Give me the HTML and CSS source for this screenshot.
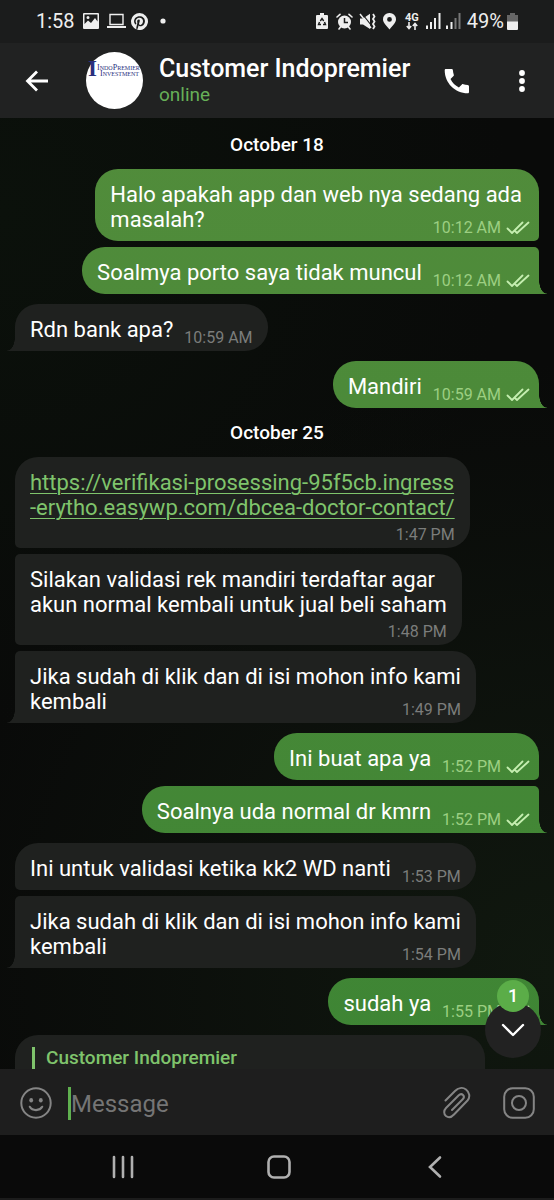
FILE: index.html
```html
<!DOCTYPE html>
<html lang="id">
<head>
<meta charset="utf-8">
<meta name="viewport" content="width=device-width, initial-scale=1">
<title>Customer Indopremier</title>
<link rel="stylesheet" href="styles.css">
</head>
<body>
<svg class="defs" aria-hidden="true">
  <symbol id="ticks" viewBox="0 0 24 14">
    <path d="M1.500 7.500 6 12 16.500 1.500M11 12 22.500 1.500M9.500 10.500 11 12" fill="none" stroke="currentColor" stroke-width="1.800" stroke-linecap="round" stroke-linejoin="round"/>
  </symbol>
</svg>

<div class="statusbar">
  <span class="clock">1:58</span>
  <svg class="st-image" width="16" height="16" viewBox="0 0 16 16"><path fill="#eee" fill-rule="evenodd" d="M1 0h14a1 1 0 0 1 1 1v14a1 1 0 0 1-1 1H1a1 1 0 0 1-1-1V1a1 1 0 0 1 1-1ZM1.500 1.500V11L5 7.500 8 10l4-5 2.500 3.500v-7ZM5 3a1.500 1.500 0 1 1 0 3 1.500 1.500 0 0 1 0-3Z"/></svg>
  <svg class="st-laptop" width="19" height="16" viewBox="0 0 19 16"><path fill="none" stroke="#eee" stroke-width="1.400" d="M3 1.500h13v10H3z"/><path fill="#eee" d="M0 13h19v2H0z"/></svg>
  <svg class="st-pin" width="17" height="17" viewBox="0 0 24 24"><path fill="#eee" d="M12 0a12 12 0 0 0-4.370 23.170c-.1-.95-.2-2.400.04-3.440l1.410-5.960s-.36-.72-.36-1.780c0-1.670.97-2.910 2.170-2.910 1.020 0 1.520.77 1.520 1.690 0 1.030-.66 2.570-1 4-.28 1.190.6 2.170 1.780 2.170 2.130 0 3.770-2.250 3.770-5.500 0-2.870-2.060-4.880-5.010-4.880-3.410 0-5.420 2.560-5.420 5.210 0 1.030.4 2.140.89 2.740.1.120.11.220.08.340l-.33 1.360c-.05.220-.17.270-.4.160-1.500-.7-2.430-2.890-2.430-4.650 0-3.780 2.750-7.260 7.930-7.260 4.160 0 7.400 2.970 7.400 6.930 0 4.140-2.610 7.460-6.230 7.460-1.220 0-2.360-.63-2.750-1.380l-.75 2.850c-.27 1.040-1 2.350-1.490 3.150A12 12 0 1 0 12 0Z"/></svg>
  <svg class="st-dot" width="6" height="6" viewBox="0 0 6 6"><circle cx="3" cy="3" r="2.600" fill="#eee"/></svg>
  <span class="spacer"></span>
  <svg width="12" height="16" viewBox="0 0 12 16"><path fill="#eee" d="M4 0h4v2h3a1 1 0 0 1 1 1v12a1 1 0 0 1-1 1H1a1 1 0 0 1-1-1V3a1 1 0 0 1 1-1h3z"/><path fill="none" stroke="#1b1c1c" stroke-width="1.400" d="M4.300 8 6 5.500 7.700 8M8.500 9l1 2.500H7M5 11.500H2.500l1-2.500"/></svg>
  <svg class="st-alarm" width="17" height="17" viewBox="0 0 17 17"><circle cx="8.500" cy="9" r="6.500" fill="#eee"/><path stroke="#eee" stroke-width="1.600" stroke-linecap="round" fill="none" d="M1 4 4 1.300M16 4l-3-2.700M4.500 14 3 16M12.500 14l1.500 2"/><path stroke="#1b1c1c" stroke-width="1.500" fill="none" d="M8.500 5v4.500h3.500"/></svg>
  <svg class="st-mute" width="18" height="17" viewBox="0 0 18 17"><path fill="#eee" d="M1 5.500h3l7-4.800V16L4 11.500H1z"/><path stroke="#1b1c1c" stroke-width="1.200" d="m3 .5 9 11.500"/><path stroke="#eee" stroke-width="1.500" d="m1 1 11 14"/><path stroke="#eee" stroke-width="1.800" fill="none" d="m14 1 1.500 2.500L14 6l1.500 2.500L14 11l1.500 2.500L14 16"/></svg>
  <svg class="st-place" width="13" height="17" viewBox="0 0 13 17"><path fill="#eee" fill-rule="evenodd" d="M6.500 0A6.400 6.400 0 0 1 13 6.500C13 10 9 13 6.500 16.500 4 13 0 10 0 6.500A6.400 6.400 0 0 1 6.500 0Zm0 4a2.400 2.400 0 1 0 0 4.800 2.400 2.400 0 0 0 0-4.800Z"/></svg>
  <span class="network"><span>4G</span><svg width="12" height="8" viewBox="0 0 12 8"><path fill="none" stroke="#eee" stroke-width="1.600" d="M3 0v6M.8 4 3 6.500 5.200 4M9 8V1.500M6.800 4 9 1.500 11.200 4"/></svg></span>
  <svg class="st-signal" width="15" height="16" viewBox="0 0 15 16"><path stroke="#eee" stroke-width="2" d="M1 12.500V16M5 9v7M9 5v11M13.500 0v16"/></svg>
  <svg class="st-signal2" width="15" height="16" viewBox="0 0 15 16"><path stroke="#eee" stroke-width="2" d="M1 12.500V16M5.500 9v7"/><path stroke="#777" stroke-width="2" d="M9.500 5v11M13.500 0v16"/></svg>
  <span class="percent">49%</span>
  <svg class="st-battery" width="11" height="17" viewBox="0 0 11 17"><path fill="#666" d="M3 0h5v2h3v7H0V2h3z"/><path fill="#eee" d="M0 8.500h11V16a1 1 0 0 1-1 1H1a1 1 0 0 1-1-1z"/></svg>
</div>

<header class="topbar">
  <button class="icon-btn back" aria-label="Back"><svg width="24" height="24" viewBox="0 0 24 24"><path fill="none" stroke="#fff" stroke-width="2.800" d="M23 12H3M12 2.500 2.500 12l9.500 9.500"/></svg></button>
  <svg class="avatar" width="57" height="57" viewBox="0 0 57 57" role="img" aria-label="IndoPremier Investment">
    <circle cx="28.500" cy="28.500" r="28.500" fill="#fff"/>
    <g class="logo-text">
      <text class="logo-mark" x="2" y="24">I</text>
      <text x="11" y="18"><tspan class="cap">I</tspan>NDO<tspan class="cap">P</tspan>REMIER</text>
      <text x="14" y="24"><tspan class="cap">I</tspan>NVESTMENT</text>
    </g>
  </svg>
  <div class="who">
    <h1 class="name">Customer Indopremier</h1>
    <p class="presence">online</p>
  </div>
  <button class="icon-btn call" aria-label="Call"><svg width="26" height="26" viewBox="0 0 26 26"><path fill="#fff" d="M2 1h5.500c.8 0 1.300.5 1.400 1.300.1 1.600.4 3 .9 4.400.2.500.1 1-.3 1.400l-3 3c2 3.900 4.500 6.400 8.400 8.400l3-3c.4-.4.900-.5 1.400-.3 1.400.5 2.800.7 4.400.8.800.1 1.300.6 1.300 1.400V24c0 .8-.5 1.300-1.300 1.300C11 25.300.7 15 .7 2.300.700 1.500 1.200 1 2 1Z"/></svg></button>
  <button class="icon-btn more" aria-label="More options"><svg width="6" height="24" viewBox="0 0 6 24"><g fill="#fff"><circle cx="3" cy="4" r="2.900"/><circle cx="3" cy="12" r="2.900"/><circle cx="3" cy="20" r="2.900"/></g></svg></button>
</header>

<main class="chat">
  <div class="messages">
    <div class="date">October 18</div>

    <div class="group out">
      <div class="bubble overlay"><p class="text">Halo apakah app dan web nya sedang ada<br>masalah?</p><div class="meta"><time>10:12 AM</time><svg class="ticks"><use href="#ticks"/></svg></div></div>
      <div class="bubble"><p class="text">Soalmya porto saya tidak muncul</p><div class="meta"><time>10:12 AM</time><svg class="ticks"><use href="#ticks"/></svg></div></div>
    </div>

    <div class="group in">
      <div class="bubble"><p class="text">Rdn bank apa?</p><div class="meta"><time>10:59 AM</time></div></div>
    </div>

    <div class="group out">
      <div class="bubble"><p class="text">Mandiri</p><div class="meta"><time>10:59 AM</time><svg class="ticks"><use href="#ticks"/></svg></div></div>
    </div>

    <div class="date">October 25</div>

    <div class="group in">
      <div class="bubble stacked"><p class="text"><a href="#">https://verifikasi-prosessing-95f5cb.ingress<br>-erytho.easywp.com/dbcea-doctor-contact/</a></p><div class="meta"><time>1:47 PM</time></div></div>
      <div class="bubble stacked"><p class="text">Silakan validasi rek mandiri terdaftar agar<br>akun normal kembali untuk jual beli saham</p><div class="meta"><time>1:48 PM</time></div></div>
      <div class="bubble overlay"><p class="text">Jika sudah di klik dan di isi mohon info kami<br>kembali</p><div class="meta"><time>1:49 PM</time></div></div>
    </div>

    <div class="group out">
      <div class="bubble"><p class="text">Ini buat apa ya</p><div class="meta"><time>1:52 PM</time><svg class="ticks"><use href="#ticks"/></svg></div></div>
      <div class="bubble"><p class="text">Soalnya uda normal dr kmrn</p><div class="meta"><time>1:52 PM</time><svg class="ticks"><use href="#ticks"/></svg></div></div>
    </div>

    <div class="group in">
      <div class="bubble"><p class="text">Ini untuk validasi ketika kk2 WD nanti</p><div class="meta"><time>1:53 PM</time></div></div>
      <div class="bubble overlay"><p class="text">Jika sudah di klik dan di isi mohon info kami<br>kembali</p><div class="meta"><time>1:54 PM</time></div></div>
    </div>

    <div class="group out">
      <div class="bubble"><p class="text">sudah ya</p><div class="meta"><time>1:55 PM</time><svg class="ticks"><use href="#ticks"/></svg></div></div>
    </div>

    <div class="group in">
      <div class="bubble reply"><div class="quote">Customer Indopremier</div></div>
    </div>
  </div>

  <button class="jump" aria-label="Go to newest message, 1 unread">
    <svg width="24" height="14" viewBox="0 0 24 14"><path fill="none" stroke="#fff" stroke-width="2.400" stroke-linecap="round" stroke-linejoin="round" d="m2 2 10 10L22 2"/></svg>
    <span class="badge">1</span>
  </button>
</main>

<form class="composer">
  <button type="button" class="icon-btn smile" aria-label="Emoji"><svg width="32" height="32" viewBox="0 0 32 32"><g fill="none" stroke="#858585" stroke-width="2" stroke-linecap="round"><circle cx="16" cy="16" r="14.700"/><path stroke-width="2.200" d="M9.800 19.800c2.600 4.400 9.800 4.400 12.400 0"/></g><g fill="#858585"><ellipse cx="11.200" cy="13.200" rx="1.900" ry="2.300"/><ellipse cx="20.800" cy="13.200" rx="1.900" ry="2.300"/></g></svg></button>
  <span class="caret"></span>
  <input class="field" type="text" placeholder="Message" aria-label="Message">
  <button type="button" class="icon-btn" aria-label="Attach"><svg width="28" height="32" viewBox="0 0 28 32"><path fill="none" stroke="#858585" stroke-width="2" stroke-linecap="round" stroke-linejoin="round" d="M2.500 13.500 12 4c3-3 7.500-4 11-1.500 3.500 2.700 4.500 7.500 1.500 11L11 27.500c-2.500 2.700-5.500 3.500-8 1.500-2.500-2.200-2.300-5.500 0-8L15.500 8.500c1.500-1.500 3.300-1.700 4.500-.5 1.200 1.200 1 3-.3 4.300L9 23"/></svg></button>
  <button type="button" class="icon-btn camera" aria-label="Record video message"><svg width="32" height="32" viewBox="0 0 32 32"><g fill="none" stroke="#858585" stroke-width="2"><rect x="1.200" y="1.200" width="29.600" height="29.600" rx="8.500"/><circle cx="16" cy="16" r="7"/></g></svg></button>
</form>

<nav class="navbar">
  <button class="icon-btn" aria-label="Recent apps"><svg width="24" height="24" viewBox="0 0 24 24"><path stroke="#b0b0b0" stroke-width="2.600" stroke-linecap="round" d="M3 2v20M12 2v20M21 2v20"/></svg></button>
  <button class="icon-btn" aria-label="Home"><svg width="26" height="26" viewBox="0 0 26 26"><rect x="2.500" y="2.500" width="21" height="21" rx="5.500" fill="none" stroke="#b0b0b0" stroke-width="2.600"/></svg></button>
  <button class="icon-btn" aria-label="Back"><svg width="24" height="24" viewBox="0 0 24 24"><path fill="none" stroke="#b0b0b0" stroke-width="2.600" stroke-linecap="round" d="M17 2.500 7 12l10 9.500"/></svg></button>
</nav>
</body>
</html>
```

FILE: styles.css
```css
* {
  box-sizing: border-box;
}

body {
  margin: 0;
  height: 100vh;
  display: flex;
  flex-direction: column;
  background: #0a0a0a;
  color: #fff;
  font-family: Roboto, "Noto Sans", sans-serif;
}

h1,
p {
  margin: 0;
}

button {
  padding: 0;
  border: 0;
  background: none;
  color: inherit;
  font: inherit;
}

svg {
  display: block;
  flex: none;
}

.defs {
  position: absolute;
  width: 0;
  height: 0;
}

.icon-btn {
  display: flex;
  align-items: center;
  justify-content: center;
  flex: none;
}

/* System status bar */
.statusbar {
  display: flex;
  align-items: center;
  flex: none;
  height: 43px;
  padding: 0 36px 1px;
  background: #1b1c1c;
  color: #eee;
  font-size: 20px;
}

.clock {
  margin-right: 8px;
}

.st-laptop,
.st-alarm {
  margin-left: 8px;
}

.st-pin {
  margin-left: 5px;
}

.st-dot {
  margin-left: 12px;
}

.spacer {
  flex: 1;
}

.st-mute {
  margin-left: 6px;
}

.st-place {
  margin-left: 6px;
}

.network {
  display: flex;
  flex-direction: column;
  align-items: center;
  margin: 0 7px 0 9px;
  font-size: 11px;
  font-weight: 700;
  line-height: 9px;
}

.st-signal2 {
  margin: 0 6px 0 5px;
}

.st-battery {
  margin-left: 3px;
}

/* Conversation header */
.topbar {
  display: flex;
  align-items: center;
  flex: none;
  height: 75px;
  padding: 0 29px 0 25px;
  background: #212222;
}

.avatar {
  margin: 0 16px 0 37px;
}

.logo-text {
  fill: #2b2f7d;
  font: 400 6px "Liberation Serif", serif;
}

.logo-text .cap {
  font-size: 8px;
}

.logo-text .logo-mark {
  font-size: 23px;
  font-weight: 700;
}

.who {
  flex: 1;
  min-width: 0;
}

.name {
  font-size: 25px;
  font-weight: 500;
  line-height: 28px;
}

.presence {
  color: #67b058;
  font-size: 19px;
  line-height: 24px;
}

.more {
  margin-left: 49px;
}

/* Message list */
.chat {
  position: relative;
  flex: 1;
  min-height: 0;
  overflow: hidden;
  background:
    radial-gradient(circle at 100% 90%, #10180f, transparent 60%),
    radial-gradient(circle at 0 10%, #0b110b, transparent 50%),
    #090a09;
}

.messages {
  display: flex;
  flex-direction: column;
  padding: 2px 15px 0;
}

.date {
  font-size: 19px;
  font-weight: 500;
  line-height: 49px;
  text-align: center;
}

.group {
  display: flex;
  flex-direction: column;
  gap: 6px;
}

.group + .group {
  margin-top: 10px;
}

.group.in {
  align-items: flex-start;
}

.group.out {
  align-items: flex-end;
}

.bubble {
  position: relative;
  display: flex;
  align-items: flex-end;
  gap: 11px;
  max-width: 100%;
  padding: 13px 15px 4px;
  border-radius: 23px;
}

.in .bubble {
  background: #1f211f;
}

.out .bubble {
  padding-right: 9px;
  background: linear-gradient(#548d3c, #3b8433) fixed;
}

.in .bubble:not(:first-child) {
  border-top-left-radius: 5px;
}

.in .bubble:not(:last-child) {
  border-bottom-left-radius: 5px;
}

.out .bubble:not(:first-child) {
  border-top-right-radius: 5px;
}

.out .bubble:not(:last-child) {
  border-bottom-right-radius: 5px;
}

.in .bubble:last-child {
  border-bottom-left-radius: 0;
}

.out .bubble:last-child {
  border-bottom-right-radius: 0;
}

/* Tail at the foot of the last bubble in a group */
.bubble:last-child::after {
  content: "";
  position: absolute;
  bottom: 0;
  width: 8px;
  height: 13px;
}

.in .bubble:last-child::after {
  right: 100%;
  background: #1f211f;
  mask: radial-gradient(8px 13px at 0 0, transparent 94%, #000);
}

.out .bubble:last-child::after {
  left: 100%;
  background: linear-gradient(#548d3c, #3b8433) fixed;
  mask: radial-gradient(8px 13px at 100% 0, transparent 94%, #000);
}

.text {
  padding-bottom: 5px;
  font-size: 22px;
  line-height: 25px;
}

.text a {
  color: #7fc46c;
  text-decoration-thickness: 1px;
  text-underline-offset: 3px;
}

.meta {
  display: flex;
  align-items: center;
  gap: 5px;
  color: #7b7d7b;
  font-size: 16px;
  line-height: 19px;
  white-space: nowrap;
}

.out .meta {
  color: #9ccf82;
}

.ticks {
  width: 24px;
  height: 14px;
  color: #c5eeb0;
}

/* Time shares the last line of a wrapped message */
.overlay {
  display: grid;
}

.overlay > * {
  grid-area: 1 / 1;
}

.overlay .meta {
  align-self: end;
  justify-self: end;
}

.out .overlay .text {
  margin-right: 8px;
}

.stacked {
  flex-direction: column;
  gap: 0;
}

.reply {
  width: 470px;
  min-height: 96px;
  align-items: flex-start;
  padding: 12px 15px 4px 17px;
}

.quote {
  padding-left: 11px;
  border-left: 3px solid #7fc46c;
  color: #7fc46c;
  font-size: 19px;
  font-weight: 500;
  line-height: 22px;
}

.jump {
  position: absolute;
  right: 13px;
  bottom: 11px;
  display: flex;
  align-items: center;
  justify-content: center;
  width: 56px;
  height: 56px;
  border-radius: 50%;
  background: #222;
}

.badge {
  position: absolute;
  top: -22px;
  left: 12px;
  width: 32px;
  height: 32px;
  border-radius: 50%;
  background: #5bad48;
  font-size: 18px;
  font-weight: 500;
  line-height: 32px;
  text-align: center;
}

/* Message composer */
.composer {
  display: flex;
  align-items: center;
  flex: none;
  height: 66px;
  padding: 2px 19px 0 20px;
  background: #1e1e1e;
}

.caret {
  width: 3px;
  height: 33px;
  margin-left: 16px;
  background: #5fb04f;
}

.field {
  flex: 1;
  min-width: 0;
  padding: 2px 0 0;
  border: 0;
  outline: 0;
  background: none;
  color: #fff;
  font: 24px Roboto, "Noto Sans", sans-serif;
}

.field::placeholder {
  color: #757575;
  opacity: 1;
}

.camera {
  margin-left: 32px;
}

/* System navigation bar */
.navbar {
  display: flex;
  align-items: center;
  justify-content: space-around;
  flex: none;
  height: 65px;
  padding: 0 42px 0 46px;
  border-bottom: 2px solid #1c1c1c;
  background: #0a0a0a;
}
```
